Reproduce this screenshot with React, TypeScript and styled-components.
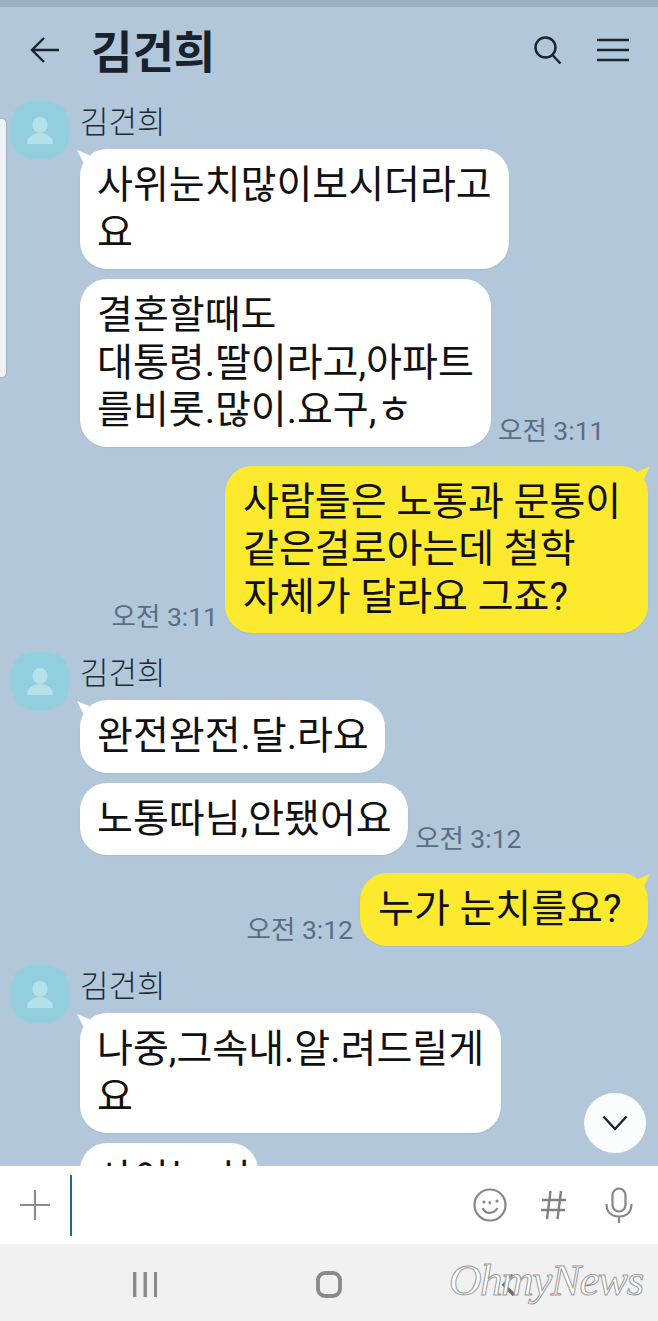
import styled, { createGlobalStyle } from 'styled-components';

const GlobalStyle = createGlobalStyle`
  html, body { margin: 0; padding: 0; background: #b2c7da; }
  * { box-sizing: border-box; }
`;

const FONT = `Roboto, "Noto Sans CJK KR", sans-serif`;

// ─── Shell ────────────────────────────────────────────────────────────────────

const Screen = styled.div`
  position: relative;
  width: 658px;
  height: 1321px;
  display: flex;
  flex-direction: column;
  overflow: hidden;
  background: #b2c7da;
  font-family: ${FONT};
`;

const StatusStrip = styled.div`
  height: 7px;
  flex: none;
  background: #9bb0c3;
`;

const Header = styled.header`
  height: 93px;
  flex: none;
  display: flex;
  align-items: center;
  padding: 0 29px 7px 30px;
`;

const Title = styled.h1`
  margin: 0 0 0 31px;
  flex: 1;
  font-size: 45px;
  line-height: 56px;
  font-weight: 700;
  color: #18222c;
  font-family: "Noto Sans CJK KR", sans-serif;
`;

const HeaderIcons = styled.div`
  display: flex;
  align-items: center;
  gap: 35px;
`;

// ─── Messages ─────────────────────────────────────────────────────────────────

const MessageList = styled.main`
  position: relative;
  flex: 1;
  min-height: 0;
  overflow: hidden;
  display: flex;
  flex-direction: column;
`;

const IncomingGroup = styled.section<{ $top?: number }>`
  display: flex;
  flex: none;
  gap: 10px;
  padding-left: 10px;
  margin-top: ${({ $top = 0 }) => $top}px;
`;

const Avatar = styled.div`
  width: 60px;
  height: 60px;
  flex: none;
`;

const Stack = styled.div`
  display: flex;
  flex-direction: column;
  gap: 10px;
`;

const SenderName = styled.div`
  height: 39px;
  font-size: 31px;
  line-height: 46px;
  font-weight: 300;
  color: #1e2b38;
`;

const Row = styled.div<{ $top?: number; $outgoing?: boolean }>`
  display: flex;
  flex: none;
  align-items: flex-end;
  gap: 7px;
  margin-top: ${({ $top = 0 }) => $top}px;
  justify-content: ${({ $outgoing }) => ($outgoing ? 'flex-end' : 'flex-start')};
  padding-right: ${({ $outgoing }) => ($outgoing ? '10px' : '0')};
`;

const Bubble = styled.div<{ $width: number; $mine?: boolean; $tail?: boolean }>`
  position: relative;
  flex: none;
  width: ${({ $width }) => $width}px;
  padding: 13px 0 12px ${({ $mine }) => ($mine ? 18 : 17)}px;
  border-radius: 27px;
  background: ${({ $mine }) => ($mine ? '#fdea2f' : '#ffffff')};
  color: #111;
  font-size: 39px;
  font-weight: 400;
  line-height: 47.5px;
  white-space: pre;
  box-shadow: 0 1px 1px rgba(70, 90, 110, 0.1);

  &::before {
    content: ${({ $tail }) => ($tail ? "''" : 'none')};
    position: absolute;
    top: 1px;
    ${({ $mine }) => ($mine ? 'right: -2px;' : 'left: -3px;')}
    width: 14px;
    height: 14px;
    background: inherit;
    clip-path: ${({ $mine }) =>
      $mine
        ? 'polygon(14px 0, 2px 5px, 2px 14px, 7px 14px)'
        : 'polygon(0 0, 12px 5px, 12px 14px, 7px 14px)'};
  }
`;

const Time = styled.span`
  flex: none;
  font-size: 26.5px;
  line-height: 32px;
  color: #5a6d83;
  white-space: nowrap;
`;

const ScrollDown = styled.button`
  position: absolute;
  right: 12px;
  top: 993px;
  width: 62px;
  height: 60px;
  padding: 0;
  border: none;
  border-radius: 50%;
  background: #fbfcfd;
  display: flex;
  align-items: center;
  justify-content: center;
`;

const SideSliver = styled.div`
  position: absolute;
  left: 0;
  top: 18px;
  width: 7px;
  height: 260px;
  background: #eef2f7;
  border: 1px solid #9fb0c0;
  border-left: none;
  border-radius: 0 5px 5px 0;
`;

// ─── Composer and system nav ──────────────────────────────────────────────────

const Composer = styled.footer`
  height: 78px;
  flex: none;
  display: flex;
  align-items: center;
  background: #fff;
  padding: 0 21px 0 20px;
`;

const Caret = styled.div`
  width: 2px;
  height: 61px;
  margin: 0 0 0 20px;
  background: #1a6a9c;
`;

const ComposerTools = styled.div`
  margin-left: auto;
  display: flex;
  align-items: center;
  gap: 34px;
`;

const SystemNav = styled.nav`
  position: relative;
  height: 77px;
  flex: none;
  display: flex;
  align-items: center;
  background: #f1f1f1;
  padding: 4px 0 0 133px;
  gap: 159px;
`;

const Watermark = styled.div`
  position: absolute;
  left: 449px;
  top: 8px;
  font-family: "Liberation Serif", serif;
  font-style: italic;
  font-size: 45px;
  line-height: 56px;
  letter-spacing: -1.4px;
  color: #fff;
  -webkit-text-stroke: 1px #9a9a9a;
  white-space: nowrap;
`;

// ─── Drawings ─────────────────────────────────────────────────────────────────

const AvatarIcon = () => (
  <Avatar>
    <svg width="60" height="60" viewBox="0 0 60 60">
      <path
        d="M30 .7C51 .7 59.300 9 59.300 30S51 59.300 30 59.300 .7 51 .7 30 9 .7 30 .7Z"
        fill="#92cfde"
        stroke="#9dcfd9"
      />
      <ellipse cx="30" cy="25" rx="7.500" ry="8" fill="#b6e0ea" />
      <path d="M17 44c0-7 6-11 13-11s13 4 13 11Z" fill="#b6e0ea" />
    </svg>
  </Avatar>
);

const BackIcon = () => (
  <svg width="30" height="28" viewBox="0 0 30 28" fill="none" stroke="#1b2530" strokeWidth="2.400">
    <path d="M29 14H2M14 2 2 14l12 12" />
  </svg>
);

const SearchIcon = () => (
  <svg width="28" height="28" viewBox="0 0 28 28" fill="none" stroke="#1b2530" strokeWidth="2.400">
    <circle cx="11.500" cy="11.500" r="10" />
    <path d="m18.500 19 8 8.500" />
  </svg>
);

const MenuIcon = () => (
  <svg width="32" height="24" viewBox="0 0 32 24" fill="none" stroke="#1b2530" strokeWidth="2.600">
    <path d="M0 2h32M0 12h32M0 22h32" />
  </svg>
);

const ChevronDown = () => (
  <svg width="26" height="16" viewBox="0 0 26 16" fill="none" stroke="#1b2530" strokeWidth="2.400">
    <path d="M1.500 1.500 13 14 24.500 1.500" />
  </svg>
);

const PlusIcon = () => (
  <svg width="30" height="30" viewBox="0 0 30 30" fill="none" stroke="#8c8c8c" strokeWidth="2.200">
    <path d="M0 15h30M15 0v30" />
  </svg>
);

const SmileIcon = () => (
  <svg width="34" height="34" viewBox="0 0 34 34" fill="none" stroke="#868686" strokeWidth="2.200">
    <circle cx="17" cy="17" r="15.500" />
    <circle cx="11" cy="14" r="1.600" fill="#868686" stroke="none" />
    <circle cx="24" cy="13" r="1.600" fill="#868686" stroke="none" />
    <path d="M17.500 13.500c-1.400.6-1.400 2 .2 2.400M9.500 20c3 6.500 11 6.500 15 0" />
  </svg>
);

const HashIcon = () => (
  <svg width="26" height="30" viewBox="0 0 26 30" fill="none" stroke="#808080" strokeWidth="2.400">
    <path d="M9.500 1 6 29M20 1l-3.500 28M1 10h24M0 20h24" />
  </svg>
);

const MicIcon = () => (
  <svg width="36" height="36" viewBox="-4 0 36 36" fill="none" stroke="#868686" strokeWidth="2.200">
    <rect x="7.500" y="1.500" width="13" height="23" rx="6.500" />
    <path d="M1.500 17c0 8 5 12.500 12.500 12.500S26.500 25 26.500 17M14 29.500V36" />
  </svg>
);

const RecentsIcon = () => (
  <svg width="24" height="26" viewBox="0 0 24 26" fill="#8a8a8a">
    <rect x="0" y="0" width="3.400" height="25" />
    <rect x="10.500" y="0" width="3.400" height="25" />
    <rect x="21" y="0" width="3" height="25" />
  </svg>
);

const HomeIcon = () => (
  <svg width="26" height="27" viewBox="0 0 26 27" fill="none" stroke="#8a8a8a" strokeWidth="3.800">
    <rect x="2" y="2" width="22" height="23" rx="7" />
  </svg>
);

const BackNavIcon = () => (
  <svg width="16" height="26" viewBox="0 0 16 26" fill="none" stroke="#6f6f6f" strokeWidth="3.400">
    <path d="M12 3 3 13l10 10" />
  </svg>
);

export default function App() {
  return (
    <>
      <GlobalStyle />
      <Screen>
        <StatusStrip />
        <Header>
          <BackIcon />
          <Title>김건희</Title>
          <HeaderIcons>
            <SearchIcon />
            <MenuIcon />
          </HeaderIcons>
        </Header>

        <MessageList>
          <IncomingGroup>
            <AvatarIcon />
            <Stack>
              <SenderName>김건희</SenderName>
              <Row>
                <Bubble $width={429} $tail>{'사위눈치많이보시더라고\n요'}</Bubble>
              </Row>
              <Row>
                <Bubble $width={411}>{'결혼할때도\n대통령.딸이라고,아파트\n를비롯.많이.요구,ㅎ'}</Bubble>
                <Time>오전 3:11</Time>
              </Row>
            </Stack>
          </IncomingGroup>

          <Row $outgoing $top={19}>
            <Time>오전 3:11</Time>
            <Bubble $width={423} $mine $tail>{'사람들은 노통과 문통이\n같은걸로아는데 철학\n자체가 달라요 그죠?'}</Bubble>
          </Row>

          <IncomingGroup $top={18}>
            <AvatarIcon />
            <Stack>
              <SenderName>김건희</SenderName>
              <Row>
                <Bubble $width={305} $tail>완전완전.달.라요</Bubble>
              </Row>
              <Row>
                <Bubble $width={328}>노통따님,안됐어요</Bubble>
                <Time>오전 3:12</Time>
              </Row>
            </Stack>
          </IncomingGroup>

          <Row $outgoing $top={18}>
            <Time>오전 3:12</Time>
            <Bubble $width={288} $mine $tail>누가 눈치를요?</Bubble>
          </Row>

          <IncomingGroup $top={18.5}>
            <AvatarIcon />
            <Stack>
              <SenderName>김건희</SenderName>
              <Row>
                <Bubble $width={421} $tail>{'나중,그속내.알.려드릴게\n요'}</Bubble>
              </Row>
              <Row>
                <Bubble $width={178}>사이는.치</Bubble>
              </Row>
            </Stack>
          </IncomingGroup>

          <ScrollDown>
            <ChevronDown />
          </ScrollDown>
          <SideSliver />
        </MessageList>

        <Composer>
          <PlusIcon />
          <Caret />
          <ComposerTools>
            <SmileIcon />
            <HashIcon />
            <MicIcon />
          </ComposerTools>
        </Composer>

        <SystemNav>
          <RecentsIcon />
          <HomeIcon />
          <BackNavIcon />
          <Watermark>OhmyNews</Watermark>
        </SystemNav>
      </Screen>
    </>
  );
}
